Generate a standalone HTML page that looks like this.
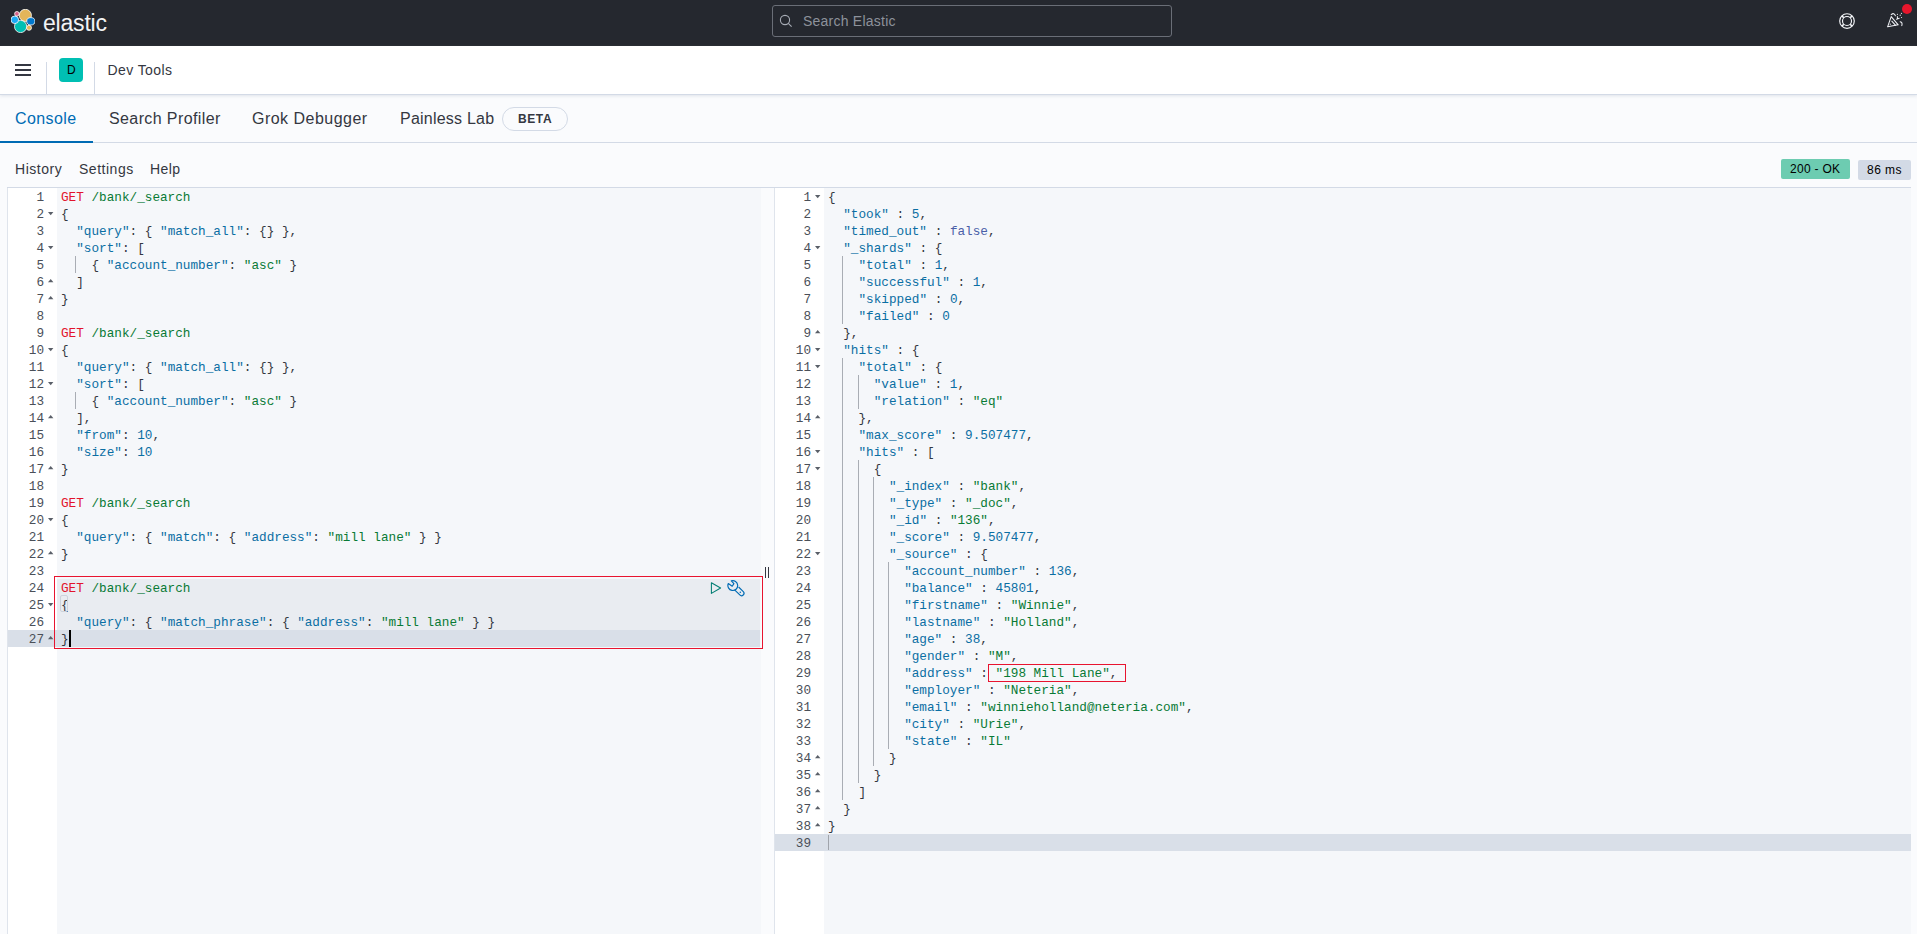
<!DOCTYPE html>
<html><head><meta charset="utf-8">
<style>
html,body{margin:0;padding:0;}
body{width:1917px;height:934px;overflow:hidden;position:relative;background:#fafbfd;font-family:"Liberation Sans",sans-serif;color:#343741;}
.abs{position:absolute;}
#h1{position:absolute;left:0;top:0;width:1917px;height:46px;background:#25282f;}
#h2{position:absolute;left:0;top:46px;width:1917px;height:48px;background:#fff;border-bottom:1px solid #d3dae6;box-shadow:0 1px 3px rgba(152,162,179,.25);}
.sep{position:absolute;top:62px;width:1px;height:32px;background:#d3dae6;}
.txt{position:absolute;white-space:pre;line-height:1;}
.tab{font-size:16px;color:#343741;}
.tool{font-size:14px;color:#343741;}
#edL{position:absolute;left:7px;top:187px;width:753px;height:747px;border-top:1px solid #d3dae6;border-left:1px solid #dfe4ec;background:#f5f7fa;}
#gutL{position:absolute;left:8px;top:188px;width:49px;height:746px;background:#fff;}
#edR{position:absolute;left:774px;top:187px;width:1136px;height:747px;border-top:1px solid #d3dae6;border-left:1px solid #dfe4ec;background:#f5f7fa;}
#gutR{position:absolute;left:775px;top:188px;width:49px;height:746px;background:#fff;}
#topline{position:absolute;left:7px;top:187px;width:1904px;height:1px;background:#d3dae6;}
.ln{position:absolute;height:17px;line-height:17px;text-align:right;font-family:"Liberation Mono",monospace;font-size:12.7px;color:#4a4f58;white-space:pre;}
.code{position:absolute;height:17px;line-height:17px;font-family:"Liberation Mono",monospace;font-size:12.7px;white-space:pre;color:#343741;}
.fw{position:absolute;width:0;height:0;border-left:2.8px solid transparent;border-right:2.8px solid transparent;}
.fw.d{border-top:3px solid #5a5f68;margin-top:7px;}
.fw.u{border-bottom:3px solid #5a5f68;margin-top:6px;}
.fws{position:absolute;}
.igrow{position:absolute;left:0;height:17px;width:0;}
.ig{position:absolute;top:0;width:1px;height:17px;background:#a9adb4;}
</style></head><body>
<div id="h1"></div>
<!-- logo -->
<svg class="abs" style="left:11px;top:9px" width="24" height="24" viewBox="0 0 24 24">
  <circle cx="14.35" cy="6.4" r="6.1" fill="#e3b55a" stroke="#fff" stroke-width="0.8"/>
  <circle cx="9.6" cy="17.5" r="6.1" fill="#00bfb3" stroke="#fff" stroke-width="0.8"/>
  <ellipse cx="19.8" cy="12.3" rx="4.1" ry="3.7" fill="#0077cc" stroke="#fff" stroke-width="0.8"/>
  <circle cx="3.8" cy="10.8" r="3.8" fill="#1ba9f5" stroke="#fff" stroke-width="0.8"/>
  <circle cx="5.9" cy="4.8" r="2.3" fill="#d36086" stroke="#fff" stroke-width="0.8"/>
  <circle cx="18" cy="18.8" r="2.5" fill="#e3b55a" stroke="#fff" stroke-width="0.8"/>
</svg>
<div class="txt" style="left:43px;top:11.7px;font-size:23px;color:#f2f3f5;letter-spacing:-0.2px;">elastic</div>
<!-- search -->
<div class="abs" style="left:772px;top:5px;width:398px;height:30px;border:1px solid #6a6e77;border-radius:3px;background:#25282f;"></div>
<svg class="abs" style="left:779px;top:14px" width="14" height="14" viewBox="0 0 14 14"><circle cx="6" cy="6" r="4.6" fill="none" stroke="#a7acb5" stroke-width="1.1"/><path d="M9.3 9.3 L12.6 12.6" stroke="#a7acb5" stroke-width="1.1"/></svg>
<div class="txt" style="left:803px;top:14px;font-size:14px;color:#8d929b;letter-spacing:0.23px;">Search Elastic</div>
<!-- help icon -->
<svg class="abs" style="left:1839px;top:13px" width="16" height="16" viewBox="0 0 16 16"><g fill="none" stroke="#f5f7fa" stroke-width="1.15"><circle cx="8" cy="8" r="7.3"/><circle cx="8" cy="8" r="4.5"/><path d="M2.9 2.9L4.8 4.8M13.1 2.9L11.2 4.8M2.9 13.1L4.8 11.2M13.1 13.1L11.2 11.2" stroke-width="1.6"/></g></svg>
<!-- newsfeed icon -->
<svg class="abs" style="left:1884px;top:10px" width="22" height="20" viewBox="1884 10 22 20"><g fill="none" stroke="#eef0f4" stroke-width="1.05" stroke-linecap="round" stroke-linejoin="round"><path d="M1887.6 26.8 L1891.2 16.6 L1898.2 24.8 Z"/><path d="M1891.8 21.2 L1895.6 25.3"/><path d="M1891.2 14.6 Q1894 12.2 1895.4 15.8"/><path d="M1896.6 19.2 L1899.2 18.2 M1897.4 16.4 L1897.4 19"/><path d="M1900.2 21.7 Q1902.8 22.4 1901.8 25.6"/></g><g fill="#eef0f4"><circle cx="1897.4" cy="14.3" r="0.6"/><circle cx="1900.2" cy="15.2" r="0.6"/><circle cx="1901.5" cy="13.3" r="0.6"/><circle cx="1901.5" cy="17.5" r="0.6"/><circle cx="1890.3" cy="24.2" r="0.6"/></g></svg>
<div class="abs" style="left:1902px;top:4px;width:10px;height:10px;border-radius:50%;background:#e7162c;"></div>

<div id="h2"></div>
<!-- hamburger -->
<div class="abs" style="left:15px;top:64px;width:16px;height:2px;background:#343741;"></div>
<div class="abs" style="left:15px;top:69px;width:16px;height:2px;background:#343741;"></div>
<div class="abs" style="left:15px;top:74px;width:16px;height:2px;background:#343741;"></div>
<div class="sep" style="left:46px;"></div>
<div class="abs" style="left:59px;top:58px;width:24px;height:24px;border-radius:4px;background:#00bfb3;"></div>
<div class="txt" style="left:67px;top:64px;font-size:12px;color:#000;">D</div>
<div class="sep" style="left:94px;"></div>
<div class="txt" style="left:107.5px;top:63px;font-size:14px;color:#343741;letter-spacing:0.41px;">Dev Tools</div>

<!-- tabs -->
<div class="abs" style="left:0;top:142px;width:1917px;height:1px;background:#d3dae6;"></div>
<div class="abs" style="left:0;top:141px;width:93px;height:2px;background:#006bb4;"></div>
<div class="txt tab" style="left:15px;top:111px;color:#006bb4;letter-spacing:0.4px;">Console</div>
<div class="txt tab" style="left:109px;top:111px;letter-spacing:0.39px;">Search Profiler</div>
<div class="txt tab" style="left:252px;top:111px;letter-spacing:0.48px;">Grok Debugger</div>
<div class="txt tab" style="left:400px;top:111px;letter-spacing:0.23px;">Painless Lab</div>
<div class="abs" style="left:502px;top:107px;width:64px;height:22px;border:1px solid #d3dae6;border-radius:12px;"></div>
<div class="txt" style="left:518px;top:113px;font-size:12px;font-weight:bold;color:#343741;letter-spacing:0.6px;">BETA</div>

<!-- toolbar -->
<div class="txt tool" style="left:15px;top:162px;letter-spacing:0.54px;">History</div>
<div class="txt tool" style="left:79px;top:162px;letter-spacing:0.52px;">Settings</div>
<div class="txt tool" style="left:150px;top:162px;letter-spacing:0.4px;">Help</div>
<div class="abs" style="left:1781px;top:159px;width:69px;height:20px;border-radius:2px;background:#6dccb1;"></div>
<div class="txt" style="left:1790px;top:163px;font-size:12px;color:#000;letter-spacing:0.29px;">200 - OK</div>
<div class="abs" style="left:1858px;top:160px;width:53px;height:20px;border-radius:2px;background:#d3dae6;"></div>
<div class="txt" style="left:1867px;top:164px;font-size:12px;color:#000;letter-spacing:0.46px;">86 ms</div>

<!-- editors -->
<div id="edL"></div>
<div id="gutL"></div>
<div id="edR"></div>
<div id="gutR"></div>
<div id="topline"></div>

<!-- left highlight -->
<div class="abs" style="left:57px;top:579px;width:703px;height:51px;background:#e9ecf1;"></div>
<div class="abs" style="left:8px;top:630px;width:752px;height:17px;background:#d9dfe8;"></div>
<!-- right active line -->
<div class="abs" style="left:775px;top:834px;width:1136px;height:17px;background:#d9dfe8;"></div>

<!-- splitter -->
<div class="abs" style="left:765px;top:567px;width:1px;height:11px;background:#343741;"></div>
<div class="abs" style="left:768px;top:567px;width:1px;height:11px;background:#343741;"></div>

<div class="ln" style="top:189px;left:8px;width:36px">1</div>
<div class="code" style="top:189px;left:61px"><span style="color:#e2142c">GET</span> <span style="color:#087a35">/bank/_search</span></div>
<div class="ln" style="top:206px;left:8px;width:36px">2</div>
<svg class="fws" style="top:212px;left:48px" width="6" height="4"><polygon points="0,0 5.4,0 2.7,3.3" fill="#5a5f68"/></svg>
<div class="code" style="top:206px;left:61px"><span style="color:#343741">{</span></div>
<div class="ln" style="top:223px;left:8px;width:36px">3</div>
<div class="code" style="top:223px;left:61px">  <span style="color:#0a6ea3">"query"</span><span style="color:#343741">:</span> <span style="color:#343741">{</span> <span style="color:#0a6ea3">"match_all"</span><span style="color:#343741">:</span> <span style="color:#343741">{</span><span style="color:#343741">}</span> <span style="color:#343741">}</span><span style="color:#343741">,</span></div>
<div class="ln" style="top:240px;left:8px;width:36px">4</div>
<svg class="fws" style="top:246px;left:48px" width="6" height="4"><polygon points="0,0 5.4,0 2.7,3.3" fill="#5a5f68"/></svg>
<div class="code" style="top:240px;left:61px">  <span style="color:#0a6ea3">"sort"</span><span style="color:#343741">:</span> <span style="color:#343741">[</span></div>
<div class="ln" style="top:257px;left:8px;width:36px">5</div>
<div class="igrow" style="top:256px"><div class="ig" style="left:75px"></div></div>
<div class="code" style="top:257px;left:61px">    <span style="color:#343741">{</span> <span style="color:#0a6ea3">"account_number"</span><span style="color:#343741">:</span> <span style="color:#087a35">"asc"</span> <span style="color:#343741">}</span></div>
<div class="ln" style="top:274px;left:8px;width:36px">6</div>
<svg class="fws" style="top:279px;left:48px" width="6" height="4"><polygon points="0,3.3 5.4,3.3 2.7,0" fill="#5a5f68"/></svg>
<div class="code" style="top:274px;left:61px">  <span style="color:#343741">]</span></div>
<div class="ln" style="top:291px;left:8px;width:36px">7</div>
<svg class="fws" style="top:296px;left:48px" width="6" height="4"><polygon points="0,3.3 5.4,3.3 2.7,0" fill="#5a5f68"/></svg>
<div class="code" style="top:291px;left:61px"><span style="color:#343741">}</span></div>
<div class="ln" style="top:308px;left:8px;width:36px">8</div>
<div class="ln" style="top:325px;left:8px;width:36px">9</div>
<div class="code" style="top:325px;left:61px"><span style="color:#e2142c">GET</span> <span style="color:#087a35">/bank/_search</span></div>
<div class="ln" style="top:342px;left:8px;width:36px">10</div>
<svg class="fws" style="top:348px;left:48px" width="6" height="4"><polygon points="0,0 5.4,0 2.7,3.3" fill="#5a5f68"/></svg>
<div class="code" style="top:342px;left:61px"><span style="color:#343741">{</span></div>
<div class="ln" style="top:359px;left:8px;width:36px">11</div>
<div class="code" style="top:359px;left:61px">  <span style="color:#0a6ea3">"query"</span><span style="color:#343741">:</span> <span style="color:#343741">{</span> <span style="color:#0a6ea3">"match_all"</span><span style="color:#343741">:</span> <span style="color:#343741">{</span><span style="color:#343741">}</span> <span style="color:#343741">}</span><span style="color:#343741">,</span></div>
<div class="ln" style="top:376px;left:8px;width:36px">12</div>
<svg class="fws" style="top:382px;left:48px" width="6" height="4"><polygon points="0,0 5.4,0 2.7,3.3" fill="#5a5f68"/></svg>
<div class="code" style="top:376px;left:61px">  <span style="color:#0a6ea3">"sort"</span><span style="color:#343741">:</span> <span style="color:#343741">[</span></div>
<div class="ln" style="top:393px;left:8px;width:36px">13</div>
<div class="igrow" style="top:392px"><div class="ig" style="left:75px"></div></div>
<div class="code" style="top:393px;left:61px">    <span style="color:#343741">{</span> <span style="color:#0a6ea3">"account_number"</span><span style="color:#343741">:</span> <span style="color:#087a35">"asc"</span> <span style="color:#343741">}</span></div>
<div class="ln" style="top:410px;left:8px;width:36px">14</div>
<svg class="fws" style="top:415px;left:48px" width="6" height="4"><polygon points="0,3.3 5.4,3.3 2.7,0" fill="#5a5f68"/></svg>
<div class="code" style="top:410px;left:61px">  <span style="color:#343741">]</span><span style="color:#343741">,</span></div>
<div class="ln" style="top:427px;left:8px;width:36px">15</div>
<div class="code" style="top:427px;left:61px">  <span style="color:#0a6ea3">"from"</span><span style="color:#343741">:</span> <span style="color:#0a6ea3">10</span><span style="color:#343741">,</span></div>
<div class="ln" style="top:444px;left:8px;width:36px">16</div>
<div class="code" style="top:444px;left:61px">  <span style="color:#0a6ea3">"size"</span><span style="color:#343741">:</span> <span style="color:#0a6ea3">10</span></div>
<div class="ln" style="top:461px;left:8px;width:36px">17</div>
<svg class="fws" style="top:466px;left:48px" width="6" height="4"><polygon points="0,3.3 5.4,3.3 2.7,0" fill="#5a5f68"/></svg>
<div class="code" style="top:461px;left:61px"><span style="color:#343741">}</span></div>
<div class="ln" style="top:478px;left:8px;width:36px">18</div>
<div class="ln" style="top:495px;left:8px;width:36px">19</div>
<div class="code" style="top:495px;left:61px"><span style="color:#e2142c">GET</span> <span style="color:#087a35">/bank/_search</span></div>
<div class="ln" style="top:512px;left:8px;width:36px">20</div>
<svg class="fws" style="top:518px;left:48px" width="6" height="4"><polygon points="0,0 5.4,0 2.7,3.3" fill="#5a5f68"/></svg>
<div class="code" style="top:512px;left:61px"><span style="color:#343741">{</span></div>
<div class="ln" style="top:529px;left:8px;width:36px">21</div>
<div class="code" style="top:529px;left:61px">  <span style="color:#0a6ea3">"query"</span><span style="color:#343741">:</span> <span style="color:#343741">{</span> <span style="color:#0a6ea3">"match"</span><span style="color:#343741">:</span> <span style="color:#343741">{</span> <span style="color:#0a6ea3">"address"</span><span style="color:#343741">:</span> <span style="color:#087a35">"mill lane"</span> <span style="color:#343741">}</span> <span style="color:#343741">}</span></div>
<div class="ln" style="top:546px;left:8px;width:36px">22</div>
<svg class="fws" style="top:551px;left:48px" width="6" height="4"><polygon points="0,3.3 5.4,3.3 2.7,0" fill="#5a5f68"/></svg>
<div class="code" style="top:546px;left:61px"><span style="color:#343741">}</span></div>
<div class="ln" style="top:563px;left:8px;width:36px">23</div>
<div class="ln" style="top:580px;left:8px;width:36px">24</div>
<div class="code" style="top:580px;left:61px"><span style="color:#e2142c">GET</span> <span style="color:#087a35">/bank/_search</span></div>
<div class="ln" style="top:597px;left:8px;width:36px">25</div>
<svg class="fws" style="top:603px;left:48px" width="6" height="4"><polygon points="0,0 5.4,0 2.7,3.3" fill="#5a5f68"/></svg>
<div class="code" style="top:597px;left:61px"><span style="color:#343741">{</span></div>
<div class="ln" style="top:614px;left:8px;width:36px">26</div>
<div class="code" style="top:614px;left:61px">  <span style="color:#0a6ea3">"query"</span><span style="color:#343741">:</span> <span style="color:#343741">{</span> <span style="color:#0a6ea3">"match_phrase"</span><span style="color:#343741">:</span> <span style="color:#343741">{</span> <span style="color:#0a6ea3">"address"</span><span style="color:#343741">:</span> <span style="color:#087a35">"mill lane"</span> <span style="color:#343741">}</span> <span style="color:#343741">}</span></div>
<div class="ln" style="top:631px;left:8px;width:36px">27</div>
<svg class="fws" style="top:636px;left:48px" width="6" height="4"><polygon points="0,3.3 5.4,3.3 2.7,0" fill="#5a5f68"/></svg>
<div class="code" style="top:631px;left:61px"><span style="color:#343741">}</span></div>
<div class="ln" style="top:189px;left:775px;width:36px">1</div>
<svg class="fws" style="top:195px;left:815px" width="6" height="4"><polygon points="0,0 5.4,0 2.7,3.3" fill="#5a5f68"/></svg>
<div class="code" style="top:189px;left:828px"><span style="color:#343741">{</span></div>
<div class="ln" style="top:206px;left:775px;width:36px">2</div>
<div class="code" style="top:206px;left:828px">  <span style="color:#0a6ea3">"took"</span> <span style="color:#343741">:</span> <span style="color:#0a6ea3">5</span><span style="color:#343741">,</span></div>
<div class="ln" style="top:223px;left:775px;width:36px">3</div>
<div class="code" style="top:223px;left:828px">  <span style="color:#0a6ea3">"timed_out"</span> <span style="color:#343741">:</span> <span style="color:#4a5fa8">false</span><span style="color:#343741">,</span></div>
<div class="ln" style="top:240px;left:775px;width:36px">4</div>
<svg class="fws" style="top:246px;left:815px" width="6" height="4"><polygon points="0,0 5.4,0 2.7,3.3" fill="#5a5f68"/></svg>
<div class="code" style="top:240px;left:828px">  <span style="color:#0a6ea3">"_shards"</span> <span style="color:#343741">:</span> <span style="color:#343741">{</span></div>
<div class="ln" style="top:257px;left:775px;width:36px">5</div>
<div class="igrow" style="top:256px"><div class="ig" style="left:842px"></div></div>
<div class="code" style="top:257px;left:828px">    <span style="color:#0a6ea3">"total"</span> <span style="color:#343741">:</span> <span style="color:#0a6ea3">1</span><span style="color:#343741">,</span></div>
<div class="ln" style="top:274px;left:775px;width:36px">6</div>
<div class="igrow" style="top:273px"><div class="ig" style="left:842px"></div></div>
<div class="code" style="top:274px;left:828px">    <span style="color:#0a6ea3">"successful"</span> <span style="color:#343741">:</span> <span style="color:#0a6ea3">1</span><span style="color:#343741">,</span></div>
<div class="ln" style="top:291px;left:775px;width:36px">7</div>
<div class="igrow" style="top:290px"><div class="ig" style="left:842px"></div></div>
<div class="code" style="top:291px;left:828px">    <span style="color:#0a6ea3">"skipped"</span> <span style="color:#343741">:</span> <span style="color:#0a6ea3">0</span><span style="color:#343741">,</span></div>
<div class="ln" style="top:308px;left:775px;width:36px">8</div>
<div class="igrow" style="top:307px"><div class="ig" style="left:842px"></div></div>
<div class="code" style="top:308px;left:828px">    <span style="color:#0a6ea3">"failed"</span> <span style="color:#343741">:</span> <span style="color:#0a6ea3">0</span></div>
<div class="ln" style="top:325px;left:775px;width:36px">9</div>
<svg class="fws" style="top:330px;left:815px" width="6" height="4"><polygon points="0,3.3 5.4,3.3 2.7,0" fill="#5a5f68"/></svg>
<div class="code" style="top:325px;left:828px">  <span style="color:#343741">}</span><span style="color:#343741">,</span></div>
<div class="ln" style="top:342px;left:775px;width:36px">10</div>
<svg class="fws" style="top:348px;left:815px" width="6" height="4"><polygon points="0,0 5.4,0 2.7,3.3" fill="#5a5f68"/></svg>
<div class="code" style="top:342px;left:828px">  <span style="color:#0a6ea3">"hits"</span> <span style="color:#343741">:</span> <span style="color:#343741">{</span></div>
<div class="ln" style="top:359px;left:775px;width:36px">11</div>
<svg class="fws" style="top:365px;left:815px" width="6" height="4"><polygon points="0,0 5.4,0 2.7,3.3" fill="#5a5f68"/></svg>
<div class="igrow" style="top:358px"><div class="ig" style="left:842px"></div></div>
<div class="code" style="top:359px;left:828px">    <span style="color:#0a6ea3">"total"</span> <span style="color:#343741">:</span> <span style="color:#343741">{</span></div>
<div class="ln" style="top:376px;left:775px;width:36px">12</div>
<div class="igrow" style="top:375px"><div class="ig" style="left:842px"></div><div class="ig" style="left:858px"></div></div>
<div class="code" style="top:376px;left:828px">      <span style="color:#0a6ea3">"value"</span> <span style="color:#343741">:</span> <span style="color:#0a6ea3">1</span><span style="color:#343741">,</span></div>
<div class="ln" style="top:393px;left:775px;width:36px">13</div>
<div class="igrow" style="top:392px"><div class="ig" style="left:842px"></div><div class="ig" style="left:858px"></div></div>
<div class="code" style="top:393px;left:828px">      <span style="color:#0a6ea3">"relation"</span> <span style="color:#343741">:</span> <span style="color:#087a35">"eq"</span></div>
<div class="ln" style="top:410px;left:775px;width:36px">14</div>
<svg class="fws" style="top:415px;left:815px" width="6" height="4"><polygon points="0,3.3 5.4,3.3 2.7,0" fill="#5a5f68"/></svg>
<div class="igrow" style="top:409px"><div class="ig" style="left:842px"></div></div>
<div class="code" style="top:410px;left:828px">    <span style="color:#343741">}</span><span style="color:#343741">,</span></div>
<div class="ln" style="top:427px;left:775px;width:36px">15</div>
<div class="igrow" style="top:426px"><div class="ig" style="left:842px"></div></div>
<div class="code" style="top:427px;left:828px">    <span style="color:#0a6ea3">"max_score"</span> <span style="color:#343741">:</span> <span style="color:#0a6ea3">9.507477</span><span style="color:#343741">,</span></div>
<div class="ln" style="top:444px;left:775px;width:36px">16</div>
<svg class="fws" style="top:450px;left:815px" width="6" height="4"><polygon points="0,0 5.4,0 2.7,3.3" fill="#5a5f68"/></svg>
<div class="igrow" style="top:443px"><div class="ig" style="left:842px"></div></div>
<div class="code" style="top:444px;left:828px">    <span style="color:#0a6ea3">"hits"</span> <span style="color:#343741">:</span> <span style="color:#343741">[</span></div>
<div class="ln" style="top:461px;left:775px;width:36px">17</div>
<svg class="fws" style="top:467px;left:815px" width="6" height="4"><polygon points="0,0 5.4,0 2.7,3.3" fill="#5a5f68"/></svg>
<div class="igrow" style="top:460px"><div class="ig" style="left:842px"></div><div class="ig" style="left:858px"></div></div>
<div class="code" style="top:461px;left:828px">      <span style="color:#343741">{</span></div>
<div class="ln" style="top:478px;left:775px;width:36px">18</div>
<div class="igrow" style="top:477px"><div class="ig" style="left:842px"></div><div class="ig" style="left:858px"></div><div class="ig" style="left:873px"></div></div>
<div class="code" style="top:478px;left:828px">        <span style="color:#0a6ea3">"_index"</span> <span style="color:#343741">:</span> <span style="color:#087a35">"bank"</span><span style="color:#343741">,</span></div>
<div class="ln" style="top:495px;left:775px;width:36px">19</div>
<div class="igrow" style="top:494px"><div class="ig" style="left:842px"></div><div class="ig" style="left:858px"></div><div class="ig" style="left:873px"></div></div>
<div class="code" style="top:495px;left:828px">        <span style="color:#0a6ea3">"_type"</span> <span style="color:#343741">:</span> <span style="color:#087a35">"_doc"</span><span style="color:#343741">,</span></div>
<div class="ln" style="top:512px;left:775px;width:36px">20</div>
<div class="igrow" style="top:511px"><div class="ig" style="left:842px"></div><div class="ig" style="left:858px"></div><div class="ig" style="left:873px"></div></div>
<div class="code" style="top:512px;left:828px">        <span style="color:#0a6ea3">"_id"</span> <span style="color:#343741">:</span> <span style="color:#087a35">"136"</span><span style="color:#343741">,</span></div>
<div class="ln" style="top:529px;left:775px;width:36px">21</div>
<div class="igrow" style="top:528px"><div class="ig" style="left:842px"></div><div class="ig" style="left:858px"></div><div class="ig" style="left:873px"></div></div>
<div class="code" style="top:529px;left:828px">        <span style="color:#0a6ea3">"_score"</span> <span style="color:#343741">:</span> <span style="color:#0a6ea3">9.507477</span><span style="color:#343741">,</span></div>
<div class="ln" style="top:546px;left:775px;width:36px">22</div>
<svg class="fws" style="top:552px;left:815px" width="6" height="4"><polygon points="0,0 5.4,0 2.7,3.3" fill="#5a5f68"/></svg>
<div class="igrow" style="top:545px"><div class="ig" style="left:842px"></div><div class="ig" style="left:858px"></div><div class="ig" style="left:873px"></div></div>
<div class="code" style="top:546px;left:828px">        <span style="color:#0a6ea3">"_source"</span> <span style="color:#343741">:</span> <span style="color:#343741">{</span></div>
<div class="ln" style="top:563px;left:775px;width:36px">23</div>
<div class="igrow" style="top:562px"><div class="ig" style="left:842px"></div><div class="ig" style="left:858px"></div><div class="ig" style="left:873px"></div><div class="ig" style="left:888px"></div></div>
<div class="code" style="top:563px;left:828px">          <span style="color:#0a6ea3">"account_number"</span> <span style="color:#343741">:</span> <span style="color:#0a6ea3">136</span><span style="color:#343741">,</span></div>
<div class="ln" style="top:580px;left:775px;width:36px">24</div>
<div class="igrow" style="top:579px"><div class="ig" style="left:842px"></div><div class="ig" style="left:858px"></div><div class="ig" style="left:873px"></div><div class="ig" style="left:888px"></div></div>
<div class="code" style="top:580px;left:828px">          <span style="color:#0a6ea3">"balance"</span> <span style="color:#343741">:</span> <span style="color:#0a6ea3">45801</span><span style="color:#343741">,</span></div>
<div class="ln" style="top:597px;left:775px;width:36px">25</div>
<div class="igrow" style="top:596px"><div class="ig" style="left:842px"></div><div class="ig" style="left:858px"></div><div class="ig" style="left:873px"></div><div class="ig" style="left:888px"></div></div>
<div class="code" style="top:597px;left:828px">          <span style="color:#0a6ea3">"firstname"</span> <span style="color:#343741">:</span> <span style="color:#087a35">"Winnie"</span><span style="color:#343741">,</span></div>
<div class="ln" style="top:614px;left:775px;width:36px">26</div>
<div class="igrow" style="top:613px"><div class="ig" style="left:842px"></div><div class="ig" style="left:858px"></div><div class="ig" style="left:873px"></div><div class="ig" style="left:888px"></div></div>
<div class="code" style="top:614px;left:828px">          <span style="color:#0a6ea3">"lastname"</span> <span style="color:#343741">:</span> <span style="color:#087a35">"Holland"</span><span style="color:#343741">,</span></div>
<div class="ln" style="top:631px;left:775px;width:36px">27</div>
<div class="igrow" style="top:630px"><div class="ig" style="left:842px"></div><div class="ig" style="left:858px"></div><div class="ig" style="left:873px"></div><div class="ig" style="left:888px"></div></div>
<div class="code" style="top:631px;left:828px">          <span style="color:#0a6ea3">"age"</span> <span style="color:#343741">:</span> <span style="color:#0a6ea3">38</span><span style="color:#343741">,</span></div>
<div class="ln" style="top:648px;left:775px;width:36px">28</div>
<div class="igrow" style="top:647px"><div class="ig" style="left:842px"></div><div class="ig" style="left:858px"></div><div class="ig" style="left:873px"></div><div class="ig" style="left:888px"></div></div>
<div class="code" style="top:648px;left:828px">          <span style="color:#0a6ea3">"gender"</span> <span style="color:#343741">:</span> <span style="color:#087a35">"M"</span><span style="color:#343741">,</span></div>
<div class="ln" style="top:665px;left:775px;width:36px">29</div>
<div class="igrow" style="top:664px"><div class="ig" style="left:842px"></div><div class="ig" style="left:858px"></div><div class="ig" style="left:873px"></div><div class="ig" style="left:888px"></div></div>
<div class="code" style="top:665px;left:828px">          <span style="color:#0a6ea3">"address"</span> <span style="color:#343741">:</span> <span style="color:#087a35">"198 Mill Lane"</span><span style="color:#343741">,</span></div>
<div class="ln" style="top:682px;left:775px;width:36px">30</div>
<div class="igrow" style="top:681px"><div class="ig" style="left:842px"></div><div class="ig" style="left:858px"></div><div class="ig" style="left:873px"></div><div class="ig" style="left:888px"></div></div>
<div class="code" style="top:682px;left:828px">          <span style="color:#0a6ea3">"employer"</span> <span style="color:#343741">:</span> <span style="color:#087a35">"Neteria"</span><span style="color:#343741">,</span></div>
<div class="ln" style="top:699px;left:775px;width:36px">31</div>
<div class="igrow" style="top:698px"><div class="ig" style="left:842px"></div><div class="ig" style="left:858px"></div><div class="ig" style="left:873px"></div><div class="ig" style="left:888px"></div></div>
<div class="code" style="top:699px;left:828px">          <span style="color:#0a6ea3">"email"</span> <span style="color:#343741">:</span> <span style="color:#087a35">"winnieholland@neteria.com"</span><span style="color:#343741">,</span></div>
<div class="ln" style="top:716px;left:775px;width:36px">32</div>
<div class="igrow" style="top:715px"><div class="ig" style="left:842px"></div><div class="ig" style="left:858px"></div><div class="ig" style="left:873px"></div><div class="ig" style="left:888px"></div></div>
<div class="code" style="top:716px;left:828px">          <span style="color:#0a6ea3">"city"</span> <span style="color:#343741">:</span> <span style="color:#087a35">"Urie"</span><span style="color:#343741">,</span></div>
<div class="ln" style="top:733px;left:775px;width:36px">33</div>
<div class="igrow" style="top:732px"><div class="ig" style="left:842px"></div><div class="ig" style="left:858px"></div><div class="ig" style="left:873px"></div><div class="ig" style="left:888px"></div></div>
<div class="code" style="top:733px;left:828px">          <span style="color:#0a6ea3">"state"</span> <span style="color:#343741">:</span> <span style="color:#087a35">"IL"</span></div>
<div class="ln" style="top:750px;left:775px;width:36px">34</div>
<svg class="fws" style="top:755px;left:815px" width="6" height="4"><polygon points="0,3.3 5.4,3.3 2.7,0" fill="#5a5f68"/></svg>
<div class="igrow" style="top:749px"><div class="ig" style="left:842px"></div><div class="ig" style="left:858px"></div><div class="ig" style="left:873px"></div></div>
<div class="code" style="top:750px;left:828px">        <span style="color:#343741">}</span></div>
<div class="ln" style="top:767px;left:775px;width:36px">35</div>
<svg class="fws" style="top:772px;left:815px" width="6" height="4"><polygon points="0,3.3 5.4,3.3 2.7,0" fill="#5a5f68"/></svg>
<div class="igrow" style="top:766px"><div class="ig" style="left:842px"></div><div class="ig" style="left:858px"></div></div>
<div class="code" style="top:767px;left:828px">      <span style="color:#343741">}</span></div>
<div class="ln" style="top:784px;left:775px;width:36px">36</div>
<svg class="fws" style="top:789px;left:815px" width="6" height="4"><polygon points="0,3.3 5.4,3.3 2.7,0" fill="#5a5f68"/></svg>
<div class="igrow" style="top:783px"><div class="ig" style="left:842px"></div></div>
<div class="code" style="top:784px;left:828px">    <span style="color:#343741">]</span></div>
<div class="ln" style="top:801px;left:775px;width:36px">37</div>
<svg class="fws" style="top:806px;left:815px" width="6" height="4"><polygon points="0,3.3 5.4,3.3 2.7,0" fill="#5a5f68"/></svg>
<div class="code" style="top:801px;left:828px">  <span style="color:#343741">}</span></div>
<div class="ln" style="top:818px;left:775px;width:36px">38</div>
<svg class="fws" style="top:823px;left:815px" width="6" height="4"><polygon points="0,3.3 5.4,3.3 2.7,0" fill="#5a5f68"/></svg>
<div class="code" style="top:818px;left:828px"><span style="color:#343741">}</span></div>
<div class="ln" style="top:835px;left:775px;width:36px">39</div>

<!-- cursor left -->
<div class="abs" style="left:69px;top:630px;width:2px;height:17px;background:#000;"></div>
<div class="abs" style="left:60px;top:595px;width:6px;height:15px;border:1px solid #cdd3dc;border-radius:2px;"></div>
<!-- cursor right (inactive) -->
<div class="abs" style="left:828px;top:835px;width:1px;height:15px;background:#a0a4ab;"></div>

<!-- action icons -->
<svg class="abs" style="left:709px;top:581px" width="14" height="14" viewBox="0 0 14 14"><path d="M2.4 1.8 L11.6 7 L2.4 12.4 Z" fill="none" stroke="#017d73" stroke-width="1.05" stroke-linejoin="round"/></svg>
<svg class="abs" style="left:727px;top:580px" width="19" height="18" viewBox="0 0 19 18"><path d="M4.3 0.9 A4.9 4.9 0 1 1 1.3 3.6 L5.2 6.2 L6.9 3.6 Z" fill="none" stroke="#006bb4" stroke-width="1.15" stroke-linejoin="round"/><path d="M7.6 9.8 L12.8 14.9 A2.3 2.3 0 0 0 16.3 11.6 L11.6 7.0" fill="none" stroke="#006bb4" stroke-width="1.15"/><circle cx="13.3" cy="12.3" r="0.8" fill="#006bb4"/></svg>

<!-- red annotation boxes -->
<div class="abs" style="left:54px;top:576px;width:707px;height:71px;border:1px solid #e8142f;"></div>
<div class="abs" style="left:988px;top:664px;width:136px;height:16px;border:1px solid #e8142f;"></div>
</body></html>
